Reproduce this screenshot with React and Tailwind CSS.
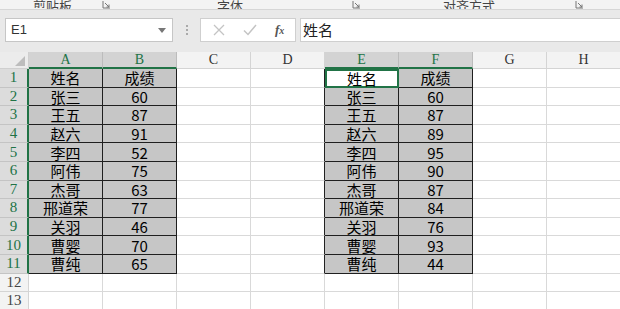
import React from "react";

const COLS = ["A", "B", "C", "D", "E", "F", "G", "H"];
const SELECTED_COLS = ["A", "B", "E", "F"];

const LEFT_ROWS = [
  ["姓名", "成绩"],
  ["张三", "60"],
  ["王五", "87"],
  ["赵六", "91"],
  ["李四", "52"],
  ["阿伟", "75"],
  ["杰哥", "63"],
  ["邢道荣", "77"],
  ["关羽", "46"],
  ["曹婴", "70"],
  ["曹纯", "65"],
];

const RIGHT_ROWS = [
  ["姓名", "成绩"],
  ["张三", "60"],
  ["王五", "87"],
  ["赵六", "89"],
  ["李四", "95"],
  ["阿伟", "90"],
  ["杰哥", "87"],
  ["邢道荣", "84"],
  ["关羽", "76"],
  ["曹婴", "93"],
  ["曹纯", "44"],
];

const CELL_FONT = "font-['Liberation_Serif','Noto_Sans_CJK_SC',serif]";

function Launcher() {
  return (
    <svg width="9" height="8" viewBox="0 0 9 8" className="mt-[1px] shrink-0">
      <path d="M1 0 V7 H8" fill="none" stroke="#777" strokeWidth="1" />
      <path d="M3 2 L7 6 M7 3.5 V6 H4.5" fill="none" stroke="#777" strokeWidth="1" />
    </svg>
  );
}

function RibbonStrip() {
  return (
    <div className="flex h-[10px] items-end overflow-hidden border-b border-[#d6d6d6] bg-[#f3f3f3] text-[13px] leading-[14px] text-[#444]">
      <div className="w-[33px] shrink-0" />
      <span className="-mb-[4px] shrink-0">剪贴板</span>
      <div className="w-[30px] shrink-0" />
      <Launcher />
      <div className="w-[106px] shrink-0" />
      <span className="-mb-[4px] shrink-0">字体</span>
      <div className="w-[109px] shrink-0" />
      <Launcher />
      <div className="w-[82px] shrink-0" />
      <span className="-mb-[4px] shrink-0">对齐方式</span>
      <div className="w-[80px] shrink-0" />
      <Launcher />
    </div>
  );
}

function FormulaBar() {
  return (
    <div className="flex h-[42px] items-start bg-[#e9e9e9] pt-[8px]">
      <div className="ml-[5px] flex h-[24px] w-[168px] items-center justify-between border border-[#c6c6c6] bg-white pl-[5px] pr-[6px]">
        <span className="font-['Liberation_Sans',sans-serif] text-[13px] text-[#333]">E1</span>
        <svg width="8" height="5" viewBox="0 0 8 5">
          <path d="M0 0 H8 L4 5 Z" fill="#777" />
        </svg>
      </div>
      <div className="flex h-[24px] w-[27px] flex-col items-center justify-center gap-[2px]">
        <span className="h-[2px] w-[2px] bg-[#aaa]" />
        <span className="h-[2px] w-[2px] bg-[#aaa]" />
        <span className="h-[2px] w-[2px] bg-[#aaa]" />
      </div>
      <div className="flex h-[24px] w-[96px] items-center border border-[#cfcfcf] bg-white">
        <svg width="12" height="12" viewBox="0 0 12 12" className="ml-[12px]">
          <path d="M1 1 L11 11 M11 1 L1 11" stroke="#c4c4c4" strokeWidth="1.3" />
        </svg>
        <svg width="14" height="12" viewBox="0 0 14 12" className="ml-[18px]">
          <path d="M1 6.5 L5 10.5 L13 1" fill="none" stroke="#c4c4c4" strokeWidth="1.5" />
        </svg>
        <span className="ml-[18px] font-['Liberation_Serif',serif] text-[13px] font-bold italic text-[#555]">
          f<span className="text-[10px]">x</span>
        </span>
      </div>
      <div className="ml-[4px] flex h-[24px] flex-1 items-center border-y border-l border-[#cfcfcf] bg-white pl-[2px] font-['Noto_Sans_CJK_SC',sans-serif] text-[15px] text-[#222]">
        姓名
      </div>
    </div>
  );
}

function getCellValue(col, row) {
  if (row > 11) return null;
  if (col === "A") return LEFT_ROWS[row - 1][0];
  if (col === "B") return LEFT_ROWS[row - 1][1];
  if (col === "E") return RIGHT_ROWS[row - 1][0];
  if (col === "F") return RIGHT_ROWS[row - 1][1];
  return null;
}

function Sheet() {
  const rows = Array.from({ length: 13 }, (_, i) => i + 1);

  return (
    <div className="grid grid-cols-[29px_repeat(8,74px)] grid-rows-[17px_repeat(13,18.6px)]">
      <div className="flex items-end justify-end border-r border-b border-[#cfcfcf] bg-[#ececec] pb-[2px] pr-[3px]">
        <svg width="10" height="10" viewBox="0 0 10 10">
          <path d="M10 0 V10 H0 Z" fill="#bdbdbd" />
        </svg>
      </div>
      {COLS.map((col) => {
        const selected = SELECTED_COLS.includes(col);
        return (
          <div
            key={col}
            className={
              selected
                ? `flex items-center justify-center border-r border-b-2 border-r-[#bcbcbc] border-b-[#217346] bg-[#d3d3d3] text-[14px] leading-none text-[#217346] ${CELL_FONT}`
                : `flex items-center justify-center border-r border-b border-[#d4d4d4] bg-[#f3f3f3] text-[14px] leading-none text-[#333] ${CELL_FONT}`
            }
          >
            {col}
          </div>
        );
      })}

      {rows.map((row) => (
        <React.Fragment key={row}>
          <div
            className={
              row <= 11
                ? `flex items-center justify-center border-r-2 border-b border-r-[#217346] border-b-[#c4c4c4] bg-[#dcdcdc] text-[15px] leading-none text-[#217346] ${CELL_FONT}`
                : `flex items-center justify-center border-r border-b border-[#d4d4d4] bg-[#f3f3f3] text-[15px] leading-none text-[#444] ${CELL_FONT}`
            }
          >
            {row}
          </div>
          {COLS.map((col) => {
            const value = getCellValue(col, row);
            const isActive = col === "E" && row === 1;

            if (value === null) {
              const leftOfTable = col === "D" && row <= 11;
              return (
                <div
                  key={col}
                  className={
                    leftOfTable
                      ? "border-r border-b border-r-[#222] border-b-[#d9d9d9] bg-white"
                      : "border-r border-b border-[#d9d9d9] bg-white"
                  }
                />
              );
            }

            return (
              <div
                key={col}
                className={
                  isActive
                    ? "flex items-center justify-center border-2 border-[#217346] bg-white text-[15px] leading-none text-black font-['Noto_Sans_CJK_SC',sans-serif]"
                    : "flex items-center justify-center border-r border-b border-[#1f1f1f] bg-[#c6c6c6] text-[15px] leading-none text-black font-['Noto_Sans_CJK_SC',sans-serif]"
                }
              >
                {value}
              </div>
            );
          })}
        </React.Fragment>
      ))}
    </div>
  );
}

export default function App() {
  return (
    <div className="h-[309px] w-[620px] overflow-hidden bg-white font-['Noto_Sans_CJK_SC',sans-serif]">
      <RibbonStrip />
      <FormulaBar />
      <Sheet />
    </div>
  );
}
